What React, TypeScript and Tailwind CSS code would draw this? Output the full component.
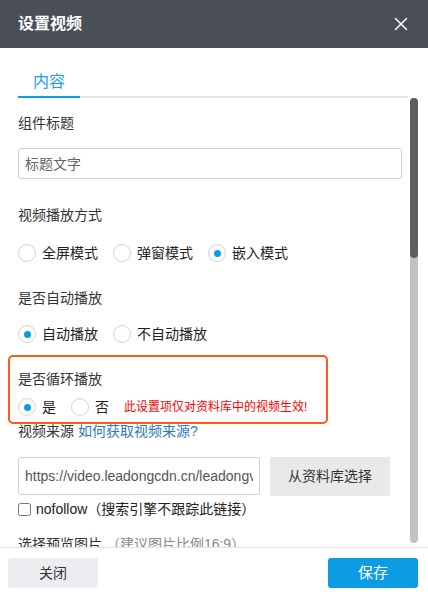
import { X } from "lucide-react";

const font = { fontFamily: '"Liberation Sans", "Noto Sans CJK SC", sans-serif' };

function Radio({ label, checked }: { label: string; checked?: boolean }) {
  return (
    <label className="flex items-center h-5 mr-[15px] text-[14px] text-[#222]">
      <span className="w-[18px] h-[18px] rounded-full border border-[#d4d4d4] bg-white flex items-center justify-center shadow-[inset_0_1px_1px_rgba(0,0,0,0.04)]">
        {checked && <span className="w-[7px] h-[7px] rounded-full bg-[#0a9be6]" />}
      </span>
      <span className="ml-[6px] leading-5">{label}</span>
    </label>
  );
}

function Label({ children }: { children: React.ReactNode }) {
  return <div className="text-[14px] leading-5 text-[#333]">{children}</div>;
}

export default function App() {
  return (
    <div className="w-[428px] h-[595px] bg-white flex flex-col overflow-hidden" style={font}>
      {/* Header */}
      <div className="h-12 shrink-0 bg-[#4a4e57] flex items-center justify-between pl-[18px] pr-[16px]">
        <h2 className="text-white text-[16px] font-bold">设置视频</h2>
        <X className="w-[22px] h-[22px] text-white" strokeWidth={1.6} />
      </div>

      {/* Tabs */}
      <div className="ml-[18px] w-[390px] flex border-b-2 border-[#e5e5e5] pt-[22px]">
        <div className="w-[62px] -mb-[2px] border-b-2 border-[#0ea0e8] pb-[2px] text-center text-[16px] leading-6 text-[#1a9ee8]">
          内容
        </div>
      </div>

      {/* Body */}
      <div className="h-[449px] shrink-0 flex">
        <div className="w-[408px] overflow-hidden pl-[18px] pr-[6px] pt-[15px]">
          <Label>组件标题</Label>
          <input
            className="mt-[15px] w-full h-[31px] border border-[#cfcfcf] rounded-[3px] px-[6px] text-[14px] text-[#555] placeholder:text-[#666] outline-none"
            placeholder="标题文字"
          />

          <div className="mt-[26px]">
            <Label>视频播放方式</Label>
          </div>
          <div className="mt-[18px] flex">
            <Radio label="全屏模式" />
            <Radio label="弹窗模式" />
            <Radio label="嵌入模式" checked />
          </div>

          <div className="mt-[25px]">
            <Label>是否自动播放</Label>
          </div>
          <div className="mt-[16px] flex">
            <Radio label="自动播放" checked />
            <Radio label="不自动播放" />
          </div>

          <div className="mt-[11px] -ml-[10px] w-[320px] border-2 border-[#ff5a1a] rounded-[5px] pl-[8px] pt-[12px] pb-[5px]">
            <Label>是否循环播放</Label>
            <div className="mt-[8px] flex items-center">
              <Radio label="是" checked />
              <Radio label="否" />
              <span className="text-[12px] text-[#ff0000]">此设置项仅对资料库中的视频生效!</span>
            </div>
          </div>

          <div className="-mt-[3px] text-[14px] leading-5 text-[#333]">
            视频来源 <a className="text-[#2b7bc4]">如何获取视频来源?</a>
          </div>
          <div className="mt-[16px] flex gap-[10px]">
            <input
              readOnly
              value="https://video.leadongcdn.cn/leadongvideo/cloud/video.mp4"
              className="w-[242px] h-[38px] border border-[#cfcfcf] rounded-[3px] px-[6px] text-[14px] text-[#555] outline-none"
              style={font}
            />
            <button className="w-[120px] h-[39px] bg-[#e9e9e9] text-[14px] text-[#333]">从资料库选择</button>
          </div>
          <label className="mt-[3px] flex items-center h-5 text-[14px] text-[#222]">
            <input type="checkbox" className="m-0 w-[13px] h-[13px]" />
            <span className="ml-[5px]">nofollow（搜索引擎不跟踪此链接）</span>
          </label>
          <div className="mt-[15px] text-[14px] leading-5 text-[#333]">
            选择预览图片 <span className="text-[#888]">（建议图片比例16:9）</span>
          </div>
        </div>
        <div className="ml-[2px] w-2 h-[445px] rounded-full bg-[#c1c1c1] flex flex-col">
          <div className="h-[160px] rounded-full bg-[#5e5e5e]" />
        </div>
      </div>

      {/* Footer */}
      <div className="flex-1 border-t border-[#e5e5e5] flex items-start justify-between pl-[8px] pr-[10px] pt-[10px]">
        <button className="w-[90px] h-[30px] rounded-[3px] bg-[#ebedf0] text-[14px] text-[#333]">关闭</button>
        <button className="w-[90px] h-[30px] rounded-[3px] bg-[#0b9ce4] text-[15px] text-white">保存</button>
      </div>
    </div>
  );
}
